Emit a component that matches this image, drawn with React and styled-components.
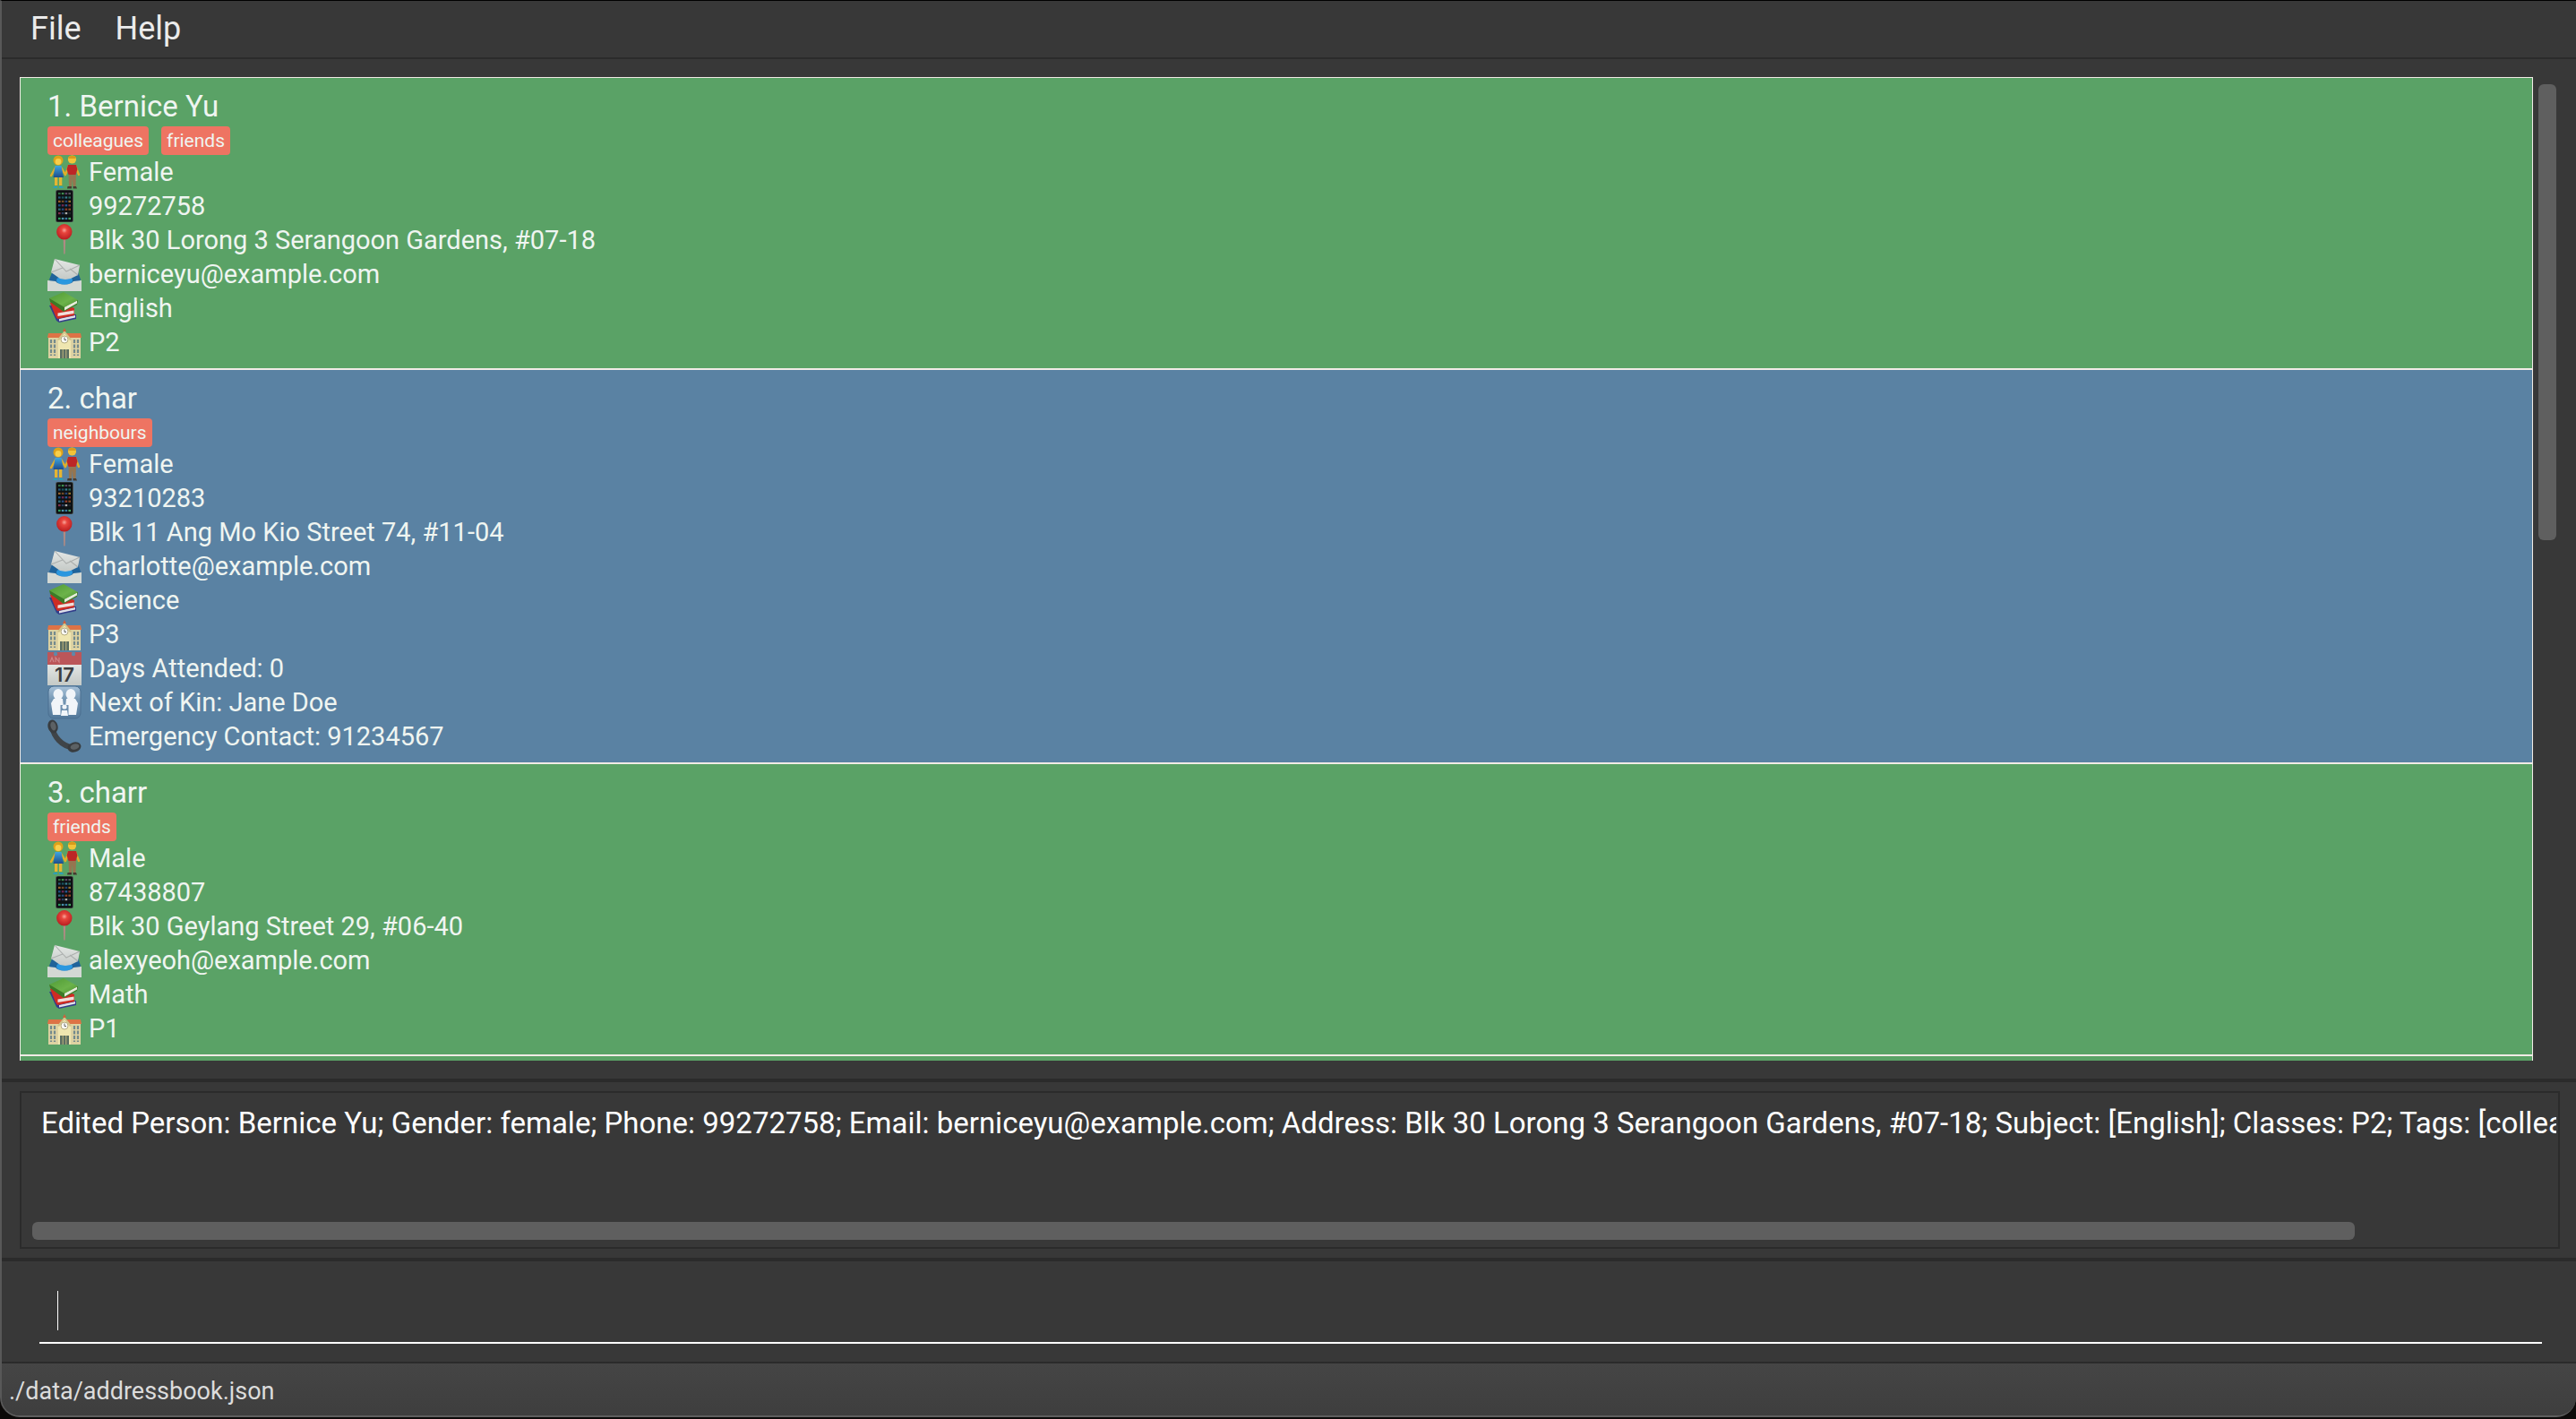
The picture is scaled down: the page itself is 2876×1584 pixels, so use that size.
import React from "react";
import styled, { createGlobalStyle } from "styled-components";

const Global = createGlobalStyle`
  * { box-sizing: border-box; }
  body { margin: 0; background: #0c0a09; font-family: Roboto, "Liberation Sans", sans-serif; }
`;

const Window = styled.div`
  display: flex;
  flex-direction: column;
  height: calc(100vh - 2px);
  overflow: hidden;
  background: #383838;
  border-top: 1px solid #000000;
  border-left: 2px solid #585858;
  border-bottom: 2px solid #5e5e5e;
  border-radius: 0 0 22px 22px;
`;

const MenuBar = styled.nav`
  display: flex;
  gap: 38px;
  padding: 9px 32px 10px;
  border-bottom: 2px solid #2b2b2b;
`;

const MenuButton = styled.button`
  padding: 0;
  border: 0;
  background: none;
  color: #ebebeb;
  font: 400 36px/44px Roboto, sans-serif;
`;

const ListPane = styled.main`
  display: flex;
  flex: 1;
  gap: 6px;
  min-height: 0;
  padding: 20px 22px 20px 20px;
`;

const PersonList = styled.ul`
  flex: 1;
  margin: 0;
  padding: 0;
  overflow: hidden;
  list-style: none;
  border: solid #f1ebe6;
  border-width: 1px 1px 0;
`;

const Cell = styled.li`
  padding: 10px 30px;
  background: ${(p) => (p.$alt ? "#5a82a3" : "#5aa266")};
  border-bottom: 2px solid #f1ebe6;
  color: #eff5f1;
`;

const Name = styled.h2`
  margin: 0;
  font-weight: 400;
  font-size: 33px;
  line-height: 44px;
`;

const Tags = styled.div`
  display: flex;
  gap: 14px;
`;

const Tag = styled.span`
  padding: 0 6px;
  border-radius: 4px;
  background: #ee7462;
  font-size: 21px;
  line-height: 32px;
`;

const Field = styled.div`
  display: flex;
  gap: 8px;
  font-size: 29px;
  line-height: 38px;
`;

const Emoji = styled.svg`
  width: 38px;
  height: 38px;
  flex: none;
`;

const VerticalTrack = styled.div`
  width: 20px;
  padding: 8px 0;
`;

const VerticalThumb = styled.div`
  height: 47%;
  border-radius: 6px;
  background: #5f5f5f;
`;

const ResultPane = styled.section`
  padding: 10px 18px 10px 20px;
  border: solid #2b2b2b;
  border-width: 4px 0;
`;

const ResultBox = styled.div`
  display: flex;
  flex-direction: column;
  height: 176px;
  padding: 12px 2px 8px 12px;
  border: 2px solid #2b2b2b;
`;

const ResultText = styled.textarea`
  flex: 1;
  display: block;
  width: 100%;
  padding: 0 0 0 10px;
  border: 0;
  outline: 0;
  resize: none;
  overflow: hidden;
  background: none;
  color: #ffffff;
  font: 400 33px/44px Roboto, sans-serif;
`;

const HorizontalThumb = styled.div`
  width: 92%;
  height: 20px;
  border-radius: 6px;
  background: #5f5f5f;
`;

const CommandPane = styled.section`
  padding: 20px 38px 20px 42px;
  border-bottom: 2px solid #2b2b2b;
`;

const CommandBox = styled.div`
  display: flex;
  align-items: center;
  height: 72px;
  padding: 0 20px;
  border-bottom: 2px solid #ffffff;
`;

const Caret = styled.span`
  width: 1px;
  height: 44px;
  background: #ffffff;
`;

const CommandInput = styled.input`
  flex: 1;
  height: 44px;
  padding: 0;
  border: 0;
  outline: 0;
  background: none;
  color: #ffffff;
  caret-color: transparent;
  font: 400 33px/44px Roboto, sans-serif;
`;

const StatusBar = styled.footer`
  padding: 12px 8px 8px;
  background: linear-gradient(#454545, #3e3e3e);
  color: #dcdcdc;
  font-size: 27px;
  line-height: 38px;
`;

const Defs = styled.svg`
  position: absolute;
  width: 0;
  height: 0;
`;

const Gradients = () => (
  <Defs aria-hidden="true">
    <defs>
      <radialGradient id="ball" cx=".5" cy=".4" r=".6">
        <stop offset="0" stopColor="#f9a79c" /><stop offset=".3" stopColor="#e8453d" /><stop offset="1" stopColor="#b81d20" />
      </radialGradient>
      <linearGradient id="paper" x1="0" y1="0" x2="0" y2="1">
        <stop offset="0" stopColor="#e4e7e5" /><stop offset="1" stopColor="#c4c9c6" />
      </linearGradient>
      <linearGradient id="sign" x1="0" y1="0" x2="0" y2="1">
        <stop offset="0" stopColor="#a9c3da" /><stop offset=".4" stopColor="#7799b6" /><stop offset="1" stopColor="#52789a" />
      </linearGradient>
      <linearGradient id="dress" x1="0" y1="0" x2="0" y2="1">
        <stop offset="0" stopColor="#3ea6e0" /><stop offset="1" stopColor="#1e4d8c" />
      </linearGradient>
      <linearGradient id="cover" x1="0" y1="0" x2="1" y2="1">
        <stop offset="0" stopColor="#4f9a35" /><stop offset=".6" stopColor="#6cb34a" /><stop offset="1" stopColor="#4a9132" />
      </linearGradient>
    </defs>
  </Defs>
);

const drawings = {
  couple: (
    <>
      <path d="M9 14L4 23M15 14L20 22M24 12L20 22M31 12L35 22" stroke="#dfae2c" strokeWidth="2.400" strokeLinecap="round" />
      <circle cx="12" cy="6" r="5.500" fill="#dfa219" /><circle cx="12" cy="7.500" r="3.400" fill="#f8cf4b" />
      <path d="M8.500 12h7l2.500 13H6.500z" fill="url(#dress)" />
      <path d="M8 25h3.300v9H8zM13 25h3.300v9H13z" fill="#e5b532" />
      <path d="M7 35h4v2H6zM13 35h4l1 2h-5z" fill="#2fa0b4" />
      <circle cx="27.500" cy="5" r="4.600" fill="#f3c338" />
      <path d="M23 3c1-3 8-3 9 0l-1 1h-7z" fill="#d99b1b" />
      <path d="M23 11h9l1.500 5-2 6h-8l-2-6z" fill="#bd2626" />
      <path d="M23.500 22h8.500l-.5 13h-3l-.7-9-.8 9h-3z" fill="#957550" />
      <path d="M22.500 35h4.500v2.500h-5zM28.500 35H32l1 2.500h-4.500z" fill="#453a30" />
    </>
  ),
  phone: (
    <>
      <rect x="9" y="1" width="20" height="36" rx="2" fill="#4d5351" />
      <rect x="10" y="1.500" width="18" height="35" rx="1.500" fill="#0d1113" />
      {[
        ["#2f6c42", "#3f8d50", "#5d4267", "#55545a"],
        ["#25597a", "#1a5562", "#397f92", "#256a59"],
        ["#95602a", "#734b26", "#264372", "#8f712c"],
        ["#1b5084", "#742953", "#285b99", "#7f3034"],
        ["#306a78", "#274c80", "#943b28", "#8a4d25"],
        ["#7c2f4c", "#2a3f5f", "#a9acac", "#20262b"],
        ["#2b9a5c", "#4a91a9", "#3578a0", "#48a565"],
      ].map((row, y) =>
        row.map((c, x) => (
          <rect key={`${x}-${y}`} x={12 + x * 3.8} y={4 + y * 4.4 + (y === 6 ? 1.5 : 0)} width="2.600" height="2.200" fill={c} />
        ))
      )}
    </>
  ),
  pin: (
    <>
      <path d="M17.600 16h2.600l-.6 18.500h-1.400z" fill="#b08a84" />
      <circle cx="18.800" cy="9.800" r="8.700" fill="url(#ball)" />
    </>
  ),
  mail: (
    <>
      <path d="M2 25L6 15l27-2 4 12-4 7H6z" fill="#20639a" />
      <ellipse cx="19" cy="26" rx="9" ry="5" fill="#2a97df" />
      <path d="M8 2L36 9 34 20 26 24l-6 1-6-1L4 17z" fill="url(#paper)" />
      <path d="M8 2L21 16 36 9M4 17l13-5M34 20l-9-7" fill="none" stroke="#acb0ae" strokeWidth="1.100" />
      <path d="M0 26l9 1c4 5 16 5 20 0l9-1v12H0z" fill="#d3d8d4" />
    </>
  ),
  books: (
    <>
      <path d="M2 16l5 0 6 12 19-2v5l-19 4-3-2z" fill="#323d8a" />
      <path d="M13 31l18-4v2.500l-18 4z" fill="#dfe1ea" />
      <path d="M3 13l4-2 23 8v8l-19 4-2-3z" fill="#cf2c23" />
      <path d="M11.500 24.500l18-3v3.500l-18 3z" fill="#f0dfdc" />
      <path d="M2 8l1 4 15 11 15-8 1-5z" fill="#3b7a27" />
      <path d="M19 17.500l14-7v3l-14 8z" fill="#e6ecdb" />
      <path d="M2 8L18 1l16 9-15 8z" fill="url(#cover)" />
    </>
  ),
  school: (
    <>
      <path d="M1 13h36v24H1z" fill="#ddd2a2" />
      <path d="M1 9h36l1 5H0z" fill="#dd7346" />
      <path d="M4 16v18M8 16v18M30 16v18M34 16v18" stroke="#748a8c" strokeWidth="2.200" strokeDasharray="4 1.500" />
      <path d="M12 16l7-8 7 8v21H12z" fill="#efe6b0" />
      <path d="M11 16l8-10 8 10-2 1-6-8-6 8z" fill="#d3c38a" />
      <path d="M17 7l2-4 2 4z" fill="#d2603b" />
      <circle cx="19" cy="16" r="4" fill="#fdfdf7" stroke="#b6ac80" /><path d="M19 13.500v3h2" fill="none" stroke="#666" />
      <path d="M14 27h10v10H14z" fill="#5b6e62" /><path d="M17.200 27v10M20.800 27v10" stroke="#c0b47c" />
    </>
  ),
  calendar: (
    <>
      <path d="M0 14h38v24H0z" fill="url(#paper)" />
      <path d="M0 1h38v14H0z" fill="#bb5659" />
      <circle cx="9" cy="3" r="2.200" fill="#6188a7" /><circle cx="29" cy="3" r="2.200" fill="#6188a7" />
      <path d="M3 12l2-5 2 5M9 12V7l4 5V7" fill="none" stroke="#cf8587" strokeWidth="1.200" />
      <text x="19" y="34" textAnchor="middle" fontFamily="Inter, sans-serif" fontSize="22" fontWeight="600" fill="#3c3d40">17</text>
    </>
  ),
  family: (
    <>
      <rect x="1" y="1" width="36" height="36" rx="6" fill="url(#sign)" stroke="#4a6f90" />
      <g fill="#f1f5f9">
        <ellipse cx="12" cy="10" rx="5.500" ry="6" /><ellipse cx="26" cy="10" rx="5.500" ry="6" />
        <path d="M7 15h10l1 10-3 8H6L4 20zM21 15h10l3 5-2 13h-9l-3-8z" />
      </g>
      <path d="M14.500 22h9v12h-9z" fill="#6d8fae" />
      <circle cx="19" cy="24" r="2.600" fill="#f1f5f9" /><path d="M16 28h6l1 6h-8z" fill="#f1f5f9" />
    </>
  ),
  receiver: (
    <>
      <path d="M5 8c2 11 10 22 25 24" fill="none" stroke="#3f4448" strokeWidth="6" strokeLinecap="round" />
      <ellipse cx="6" cy="8" rx="5.500" ry="7.500" transform="rotate(-15 6 8)" fill="#383c3f" />
      <ellipse cx="6.500" cy="7.500" rx="3" ry="5" transform="rotate(-15 6.500 7.500)" fill="#5c6164" />
      <ellipse cx="30" cy="31" rx="7.500" ry="5.500" transform="rotate(-15 30 31)" fill="#383c3f" />
      <ellipse cx="30.500" cy="30.500" rx="5" ry="3" transform="rotate(-15 30.500 30.500)" fill="#5c6164" />
    </>
  ),
};

const people = [
  {
    name: "1. Bernice Yu",
    tags: ["colleagues", "friends"],
    fields: [
      ["couple", "Female"],
      ["phone", "99272758"],
      ["pin", "Blk 30 Lorong 3 Serangoon Gardens, #07-18"],
      ["mail", "berniceyu@example.com"],
      ["books", "English"],
      ["school", "P2"],
    ],
  },
  {
    name: "2. char",
    tags: ["neighbours"],
    fields: [
      ["couple", "Female"],
      ["phone", "93210283"],
      ["pin", "Blk 11 Ang Mo Kio Street 74, #11-04"],
      ["mail", "charlotte@example.com"],
      ["books", "Science"],
      ["school", "P3"],
      ["calendar", "Days Attended: 0"],
      ["family", "Next of Kin: Jane Doe"],
      ["receiver", "Emergency Contact: 91234567"],
    ],
  },
  {
    name: "3. charr",
    tags: ["friends"],
    fields: [
      ["couple", "Male"],
      ["phone", "87438807"],
      ["pin", "Blk 30 Geylang Street 29, #06-40"],
      ["mail", "alexyeoh@example.com"],
      ["books", "Math"],
      ["school", "P1"],
    ],
  },
];

const result =
  "Edited Person: Bernice Yu; Gender: female; Phone: 99272758; Email: berniceyu@example.com; Address: Blk 30 Lorong 3 Serangoon Gardens, #07-18; Subject: [English]; Classes: P2; Tags: [colleagues][friends]";

export default function App() {
  return (
    <>
      <Global />
      <Gradients />
      <Window>
        <MenuBar>
          <MenuButton>File</MenuButton>
          <MenuButton>Help</MenuButton>
        </MenuBar>
        <ListPane>
          <PersonList>
            {people.map((p, i) => (
              <Cell key={p.name} $alt={i % 2 === 1}>
                <Name>{p.name}</Name>
                <Tags>
                  {p.tags.map((t) => (
                    <Tag key={t}>{t}</Tag>
                  ))}
                </Tags>
                {p.fields.map(([icon, text]) => (
                  <Field key={icon}>
                    <Emoji viewBox="0 0 38 38" aria-hidden="true">{drawings[icon]}</Emoji>
                    <span>{text}</span>
                  </Field>
                ))}
              </Cell>
            ))}
            <Cell />
          </PersonList>
          <VerticalTrack>
            <VerticalThumb />
          </VerticalTrack>
        </ListPane>
        <ResultPane>
          <ResultBox>
            <ResultText aria-label="Result" readOnly wrap="off" value={result} />
            <HorizontalThumb />
          </ResultBox>
        </ResultPane>
        <CommandPane>
          <CommandBox>
            <Caret />
            <CommandInput type="text" aria-label="Command" />
          </CommandBox>
        </CommandPane>
        <StatusBar>./data/addressbook.json</StatusBar>
      </Window>
    </>
  );
}
